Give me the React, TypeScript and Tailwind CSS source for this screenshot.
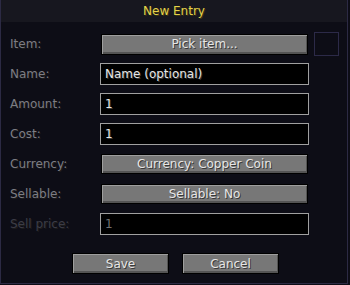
import React from "react";

const font = "font-['DejaVu_Sans',sans-serif]";

function McButton({ label, className = "" }: { label: string; className?: string }) {
  return (
    <div
      className={`flex items-center justify-center border border-black bg-[#777777] text-[12px] text-[#e6e6e6] [text-shadow:1px_1px_0_#383838] shadow-[inset_1px_1px_0_#9e9e9e,inset_-1px_-2px_0_#545454] ${className}`}
    >
      {label}
    </div>
  );
}

function Field({ value, disabled = false }: { value: string; disabled?: boolean }) {
  return (
    <div
      className={`flex h-[22px] w-[209px] items-center border border-[#a0a0a0] bg-black pl-[4px] text-[12px] ${
        disabled ? "text-[#707070]" : "text-[#e6e6e6] [text-shadow:1px_1px_0_#383838]"
      }`}
    >
      {value}
    </div>
  );
}

function Row({ label, dim = false, children }: { label: string; dim?: boolean; children: React.ReactNode }) {
  return (
    <div className="flex h-[30px] items-center">
      <div
        className={`w-[90px] text-[12px] [text-shadow:1px_1px_0_#1c1c1c] ${
          dim ? "text-[#3c3c46]" : "text-[#7d7d84]"
        }`}
      >
        {label}
      </div>
      {children}
    </div>
  );
}

export default function App() {
  return (
    <div className={`h-[285px] w-[350px] bg-[#0d0d16] ${font}`}>
      <div className="flex h-[284px] w-[348px] flex-col border-r border-b border-l border-[#2c2a44]">
        <div className="flex h-[22px] items-center justify-center bg-[#17171f] text-[12px] text-[#e3d24c] [text-shadow:1px_1px_0_#3a3410]">
          New Entry
        </div>
        <div className="flex flex-col pl-[9px] pt-[7px]">
          <Row label="Item:">
            <McButton label="Pick item..." className="ml-[1px] h-[21px] w-[207px]" />
            <div className="ml-[6px] h-[24px] w-[25px] border border-[#2c2a48]" />
          </Row>
          <Row label="Name:">
            <Field value="Name (optional)" />
          </Row>
          <Row label="Amount:">
            <Field value="1" />
          </Row>
          <Row label="Cost:">
            <Field value="1" />
          </Row>
          <Row label="Currency:">
            <McButton label="Currency: Copper Coin" className="ml-[1px] h-[20px] w-[207px]" />
          </Row>
          <Row label="Sellable:">
            <McButton label="Sellable: No" className="ml-[1px] h-[20px] w-[207px]" />
          </Row>
          <Row label="Sell price:" dim>
            <Field value="1" disabled />
          </Row>
        </div>
        <div className="mt-[14px] flex gap-[13px] pl-[71px]">
          <McButton label="Save" className="h-[21px] w-[97px]" />
          <McButton label="Cancel" className="h-[21px] w-[97px]" />
        </div>
      </div>
    </div>
  );
}
